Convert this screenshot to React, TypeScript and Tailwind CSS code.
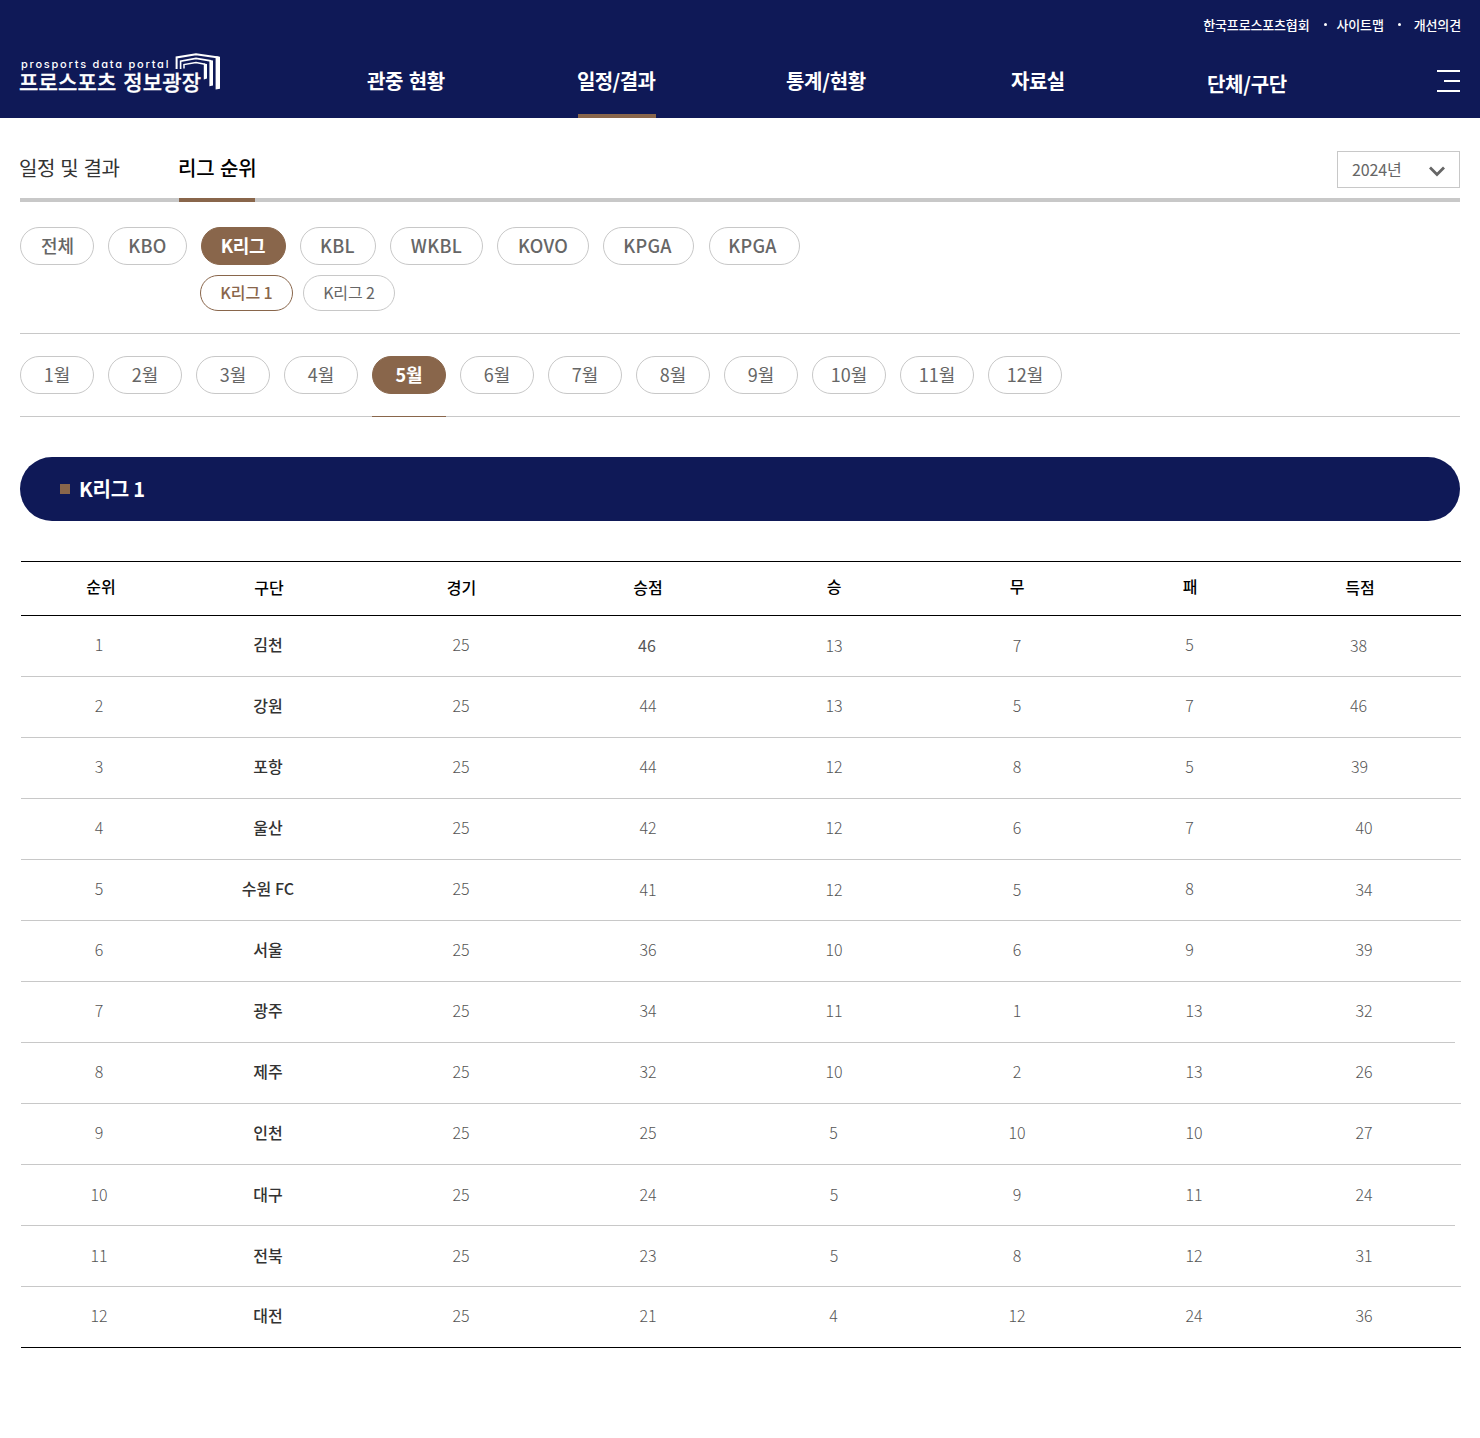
import React from "react";

const navy = "bg-[#0f1957]";

type Cell = { v: string; cls?: string };
const c = (v: string, cls = "pb-1"): Cell => ({ v, cls });
const D = "pb-[2px]";
const L = "pb-1 pr-px";

const leagues = [
  { name: "전체", w: "w-[74px] pl-px" },
  { name: "KBO", w: "w-[79px] tracking-[0.3px]" },
  { name: "K리그", w: "w-[85px] pr-px", on: true },
  { name: "KBL", w: "w-[76px] pr-px tracking-[0.3px]" },
  { name: "WKBL", w: "w-[93px] tracking-[0.3px]" },
  { name: "KOVO", w: "w-[92px] tracking-[0.3px]" },
  { name: "KPGA", w: "w-[91px] pr-[2px] tracking-[0.3px]" },
  { name: "KPGA", w: "w-[91px] ml-px pr-[4px] tracking-[0.3px]" },
];

const months = Array.from({ length: 12 }, (_, i) => `${i + 1}월`);

const headers: Cell[] = [
  c("순위", "pl-1 pb-[6px]"), c("구단", "pb-1 pl-[2px]"), c("경기", "pb-1 pl-px"), c("승점"),
  c("승", "pb-[6px]"), c("무", "pb-[6px]"), c("패", "pb-[6px]"), c("득점"),
];

const rows: Cell[][] = [
  [c("1"), c("김천"), c("25"), c("46", "pb-[2px] font-normal pr-[2px]"), c("13", D), c("7", D), c("5", L), c("38", "pb-[2px] pr-[3px]")],
  [c("2"), c("강원"), c("25"), c("44"), c("13"), c("5"), c("7", L), c("46", "pb-1 pr-[3px]")],
  [c("3"), c("포항"), c("25"), c("44"), c("12"), c("8"), c("5", L), c("39", L)],
  [c("4"), c("울산"), c("25"), c("42"), c("12"), c("6"), c("7", L), c("40", "pb-1 pl-2")],
  [c("5"), c("수원 FC"), c("25"), c("41", D), c("12", D), c("5", D), c("8", L), c("34", "pl-2 pb-[2px]")],
  [c("6"), c("서울"), c("25"), c("36"), c("10"), c("6"), c("9", L), c("39", "pb-1 pl-2")],
  [c("7"), c("광주"), c("25"), c("34"), c("11"), c("1"), c("13", "pb-1 pl-2"), c("32", "pb-1 pl-2")],
  [c("8"), c("제주"), c("25"), c("32"), c("10"), c("2"), c("13", "pb-1 pl-2"), c("26", "pb-1 pl-2")],
  [c("9"), c("인천"), c("25"), c("25"), c("5", L), c("10"), c("10", "pb-1 pl-2"), c("27", "pb-1 pl-2")],
  [c("10", D), c("대구", D), c("25", D), c("24", D), c("5", D), c("9", D), c("11", "pl-2 pb-[2px]"), c("24", "pl-2 pb-[2px]")],
  [c("11", D), c("전북", D), c("25", D), c("23", D), c("5", D), c("8", D), c("12", "pl-2 pb-[2px]"), c("31", "pl-2 pb-[2px]")],
  [c("12"), c("대전"), c("25"), c("21"), c("4", L), c("12"), c("24", "pb-1 pl-2"), c("36", "pb-1 pl-2")],
];

const cols = "grid grid-cols-[156px_182px_204px_170px_202px_164px_182px_158px]";

function Logo() {
  return (
    <div className="relative h-[42px] w-[200px] text-white">
      <div className="h-[18px] pt-[6px] pl-px font-['Inter'] text-[11px] leading-[12px] font-medium tracking-[1.78px] whitespace-nowrap [font-feature-settings:'cv11']">
        prosports data portal
      </div>
      <div className="-ml-px text-[21px] leading-[22px] font-medium whitespace-nowrap tracking-[0.15px] [word-spacing:2px] [-webkit-text-stroke:0.3px_white]">프로스포츠 정보광장</div>
      <svg className="absolute top-0 left-[154px]" width="46" height="42" viewBox="0 0 46 42" fill="none" stroke="white">
        <path d="M2.6 17V5.4L22 2.2L44.5 5.6" strokeWidth="2" />
        <path d="M6.6 17V9.2L22 6.4L37 8.9" strokeWidth="1.6" />
        <path d="M10 16.5V12.6L22 10.6L31 12.2" strokeWidth="1.5" />
        <path d="M41.6 4.2L46 4.8V36.8L41.6 37.6Z M35.4 8L39 8.6V33.4L35.4 34.2Z M29.8 11.4L33 11.9V26.5L29.8 27.4Z" fill="white" stroke="none" />
      </svg>
    </div>
  );
}

function NavItem({ label, cls, on }: { label: string; cls: string; on?: boolean }) {
  return (
    <a className={`relative flex h-full items-center whitespace-nowrap text-[20px] leading-[28px] font-bold ${cls}`}>
      {label}
      {on && <span className="absolute bottom-0 left-px h-1 w-[78px] bg-[#89664b]" />}
    </a>
  );
}

export default function App() {
  return (
    <div className="min-h-[1438px] w-[1480px] bg-white font-['Noto_Sans_CJK_KR',sans-serif] text-[#666]">
      <header className={`${navy} h-[118px] text-white`}>
        <div className="flex h-[44px] items-center justify-end pt-[5px] pr-[19px] text-[13px] leading-[18px] font-medium tracking-[-0.15px]">
          <span>한국프로스포츠협회</span>
          <span className="mr-[10px] ml-[14px] size-[3px] rounded-full bg-white" />
          <span>사이트맵</span>
          <span className="mr-[13px] ml-[14px] size-[3px] rounded-full bg-white" />
          <span>개선의견</span>
        </div>
        <div className="flex h-[74px]">
          <div className="ml-5 w-[347px] pt-2"><Logo /></div>
          <NavItem label="관중 현황" cls="w-[210px] pb-px tracking-[-0.5px] [word-spacing:2px]" />
          <NavItem label="일정/결과" cls="w-[209px] pb-px tracking-[-0.6px]" on />
          <NavItem label="통계/현황" cls="w-[225px] pb-px tracking-[-0.3px]" />
          <NavItem label="자료실" cls="w-[196px] pb-px tracking-[-0.5px]" />
          <NavItem label="단체/구단" cls="w-[229px] pt-[5px] tracking-[-0.3px]" />
          <div className="mt-[26px] flex h-[22px] w-[24px] flex-col items-end justify-between">
            <span className="h-[2px] w-[23px] bg-white" />
            <span className="h-[2px] w-4 bg-white" />
            <span className="h-[2px] w-[23px] bg-white" />
          </div>
        </div>
      </header>

      <main className="px-5">
        <div className="flex h-[84px] justify-between border-b-4 border-[#c8c8c8]">
          <nav className="flex h-[84px] text-[20px] leading-[28px]">
            <a className="-ml-px w-[160px] pt-[36px] text-[#333] tracking-[-0.4px] [word-spacing:1.2px]">일정 및 결과</a>
            <a className="h-[84px] w-[76px] border-b-4 border-[#89664b] pt-[36px] font-medium whitespace-nowrap text-black">
              <span className="-ml-px tracking-[-0.1px] [word-spacing:1px]">리그 순위</span>
            </a>
          </nav>
          <button className="mt-[33px] flex h-[37px] w-[123px] items-center justify-between border border-[#c8c8c8] pr-[14px] pl-[14px] text-[16px] leading-none tracking-[-0.1px]">
            <span className="pb-[2px]">2024년</span>
            <svg className="mt-[3px]" width="16" height="11" viewBox="0 0 16 11" fill="none" stroke="#666" strokeWidth="2.8">
              <path d="M1 1.5L8 8.5L15 1.5" />
            </svg>
          </button>
        </div>

        <section className="h-[132px] border-b border-[#c8c8c8] pt-[25px]">
          <div className="flex gap-[14px]">
            {leagues.map((l, i) => (
              <button
                key={i}
                className={`flex h-[38px] items-center justify-center rounded-full border pb-[2px] text-[18px] leading-[26px] ${l.w} ${l.on ? "border-[#89664b] bg-[#89664b] font-bold text-white tracking-[-0.4px]" : "border-[#c8c8c8] font-medium"}`}
              >
                {l.name}
              </button>
            ))}
          </div>
          <div className="mt-[10px] ml-[180px] flex gap-[10px] text-[16px] leading-[24px] tracking-[-0.1px]">
            <button className="h-[36px] w-[93px] rounded-full border border-[#89664b] pb-[2px] font-medium text-[#89664b]">K리그 1</button>
            <button className="h-[36px] w-[92px] rounded-full border border-[#c8c8c8] pb-[2px]">K리그 2</button>
          </div>
        </section>

        <section className="h-[83px] border-b border-[#c8c8c8] pt-[22px]">
          <div className="flex gap-[14px]">
            {months.map((m, i) => (
              <div key={m} className={`h-[61px] w-[74px] ${i === 4 ? "border-b border-[#89664b]" : ""}`}>
                <button
                  className={`flex h-[38px] w-[74px] items-center justify-center rounded-full border pb-[2px] text-[18px] leading-[26px] ${i === 4 ? "border-[#89664b] bg-[#89664b] font-bold text-white" : "border-[#c8c8c8]"}`}
                >
                  {m}
                </button>
              </div>
            ))}
          </div>
        </section>

        <h2 className={`${navy} mt-10 flex h-16 items-center rounded-full pl-10 text-[20px] leading-[28px] font-bold text-white tracking-[-0.2px]`}>
          <span className="mr-[9px] size-[10px] bg-[#89664b]" />
          K리그 1
        </h2>

        <div className="mt-10 ml-px w-[1440px] text-center text-[16px] leading-[24px]">
          <div className={`${cols} h-[55px] border-y border-black font-medium text-black`}>
            {headers.map((h) => (
              <div key={h.v} className={`flex items-center justify-center ${h.cls}`}>{h.v}</div>
            ))}
          </div>
          {rows.map((r, i) => (
            <div
              key={i}
              className={`${cols} h-[61px] border-b font-light ${i === 11 ? "border-black" : "border-[#c8c8c8]"} ${i === 6 || i === 9 ? "w-[1434px]" : ""}`}
            >
              {r.map((cell, j) => (
                <div key={j} className={`flex items-center justify-center ${j === 1 ? "font-medium text-[#333]" : "text-[#555]"} ${cell.cls}`}>
                  {cell.v}
                </div>
              ))}
            </div>
          ))}
        </div>
      </main>
    </div>
  );
}
